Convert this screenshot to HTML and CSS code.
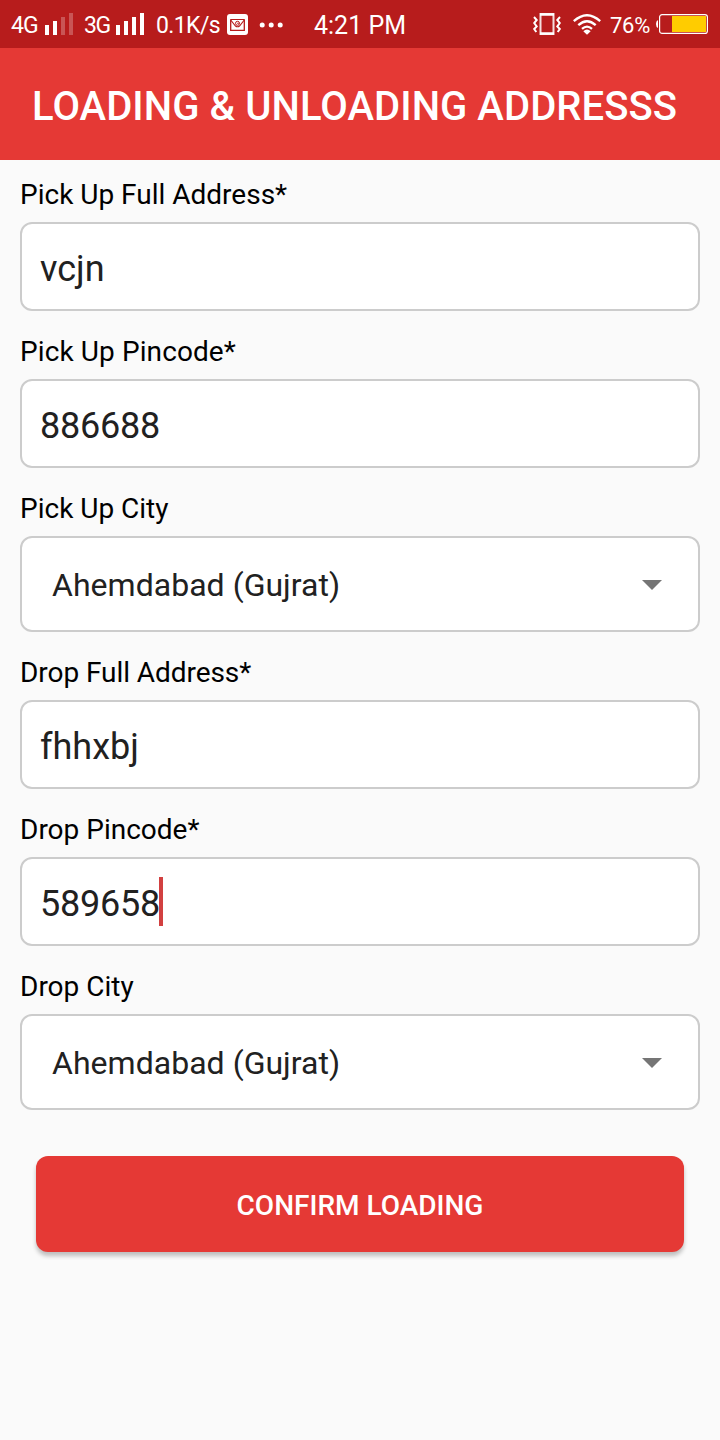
FILE: index.html
```html
<!DOCTYPE html>
<html lang="en">
<head>
<meta charset="utf-8">
<title>Loading &amp; Unloading Address</title>
<link rel="stylesheet" href="styles.css">
</head>
<body>
<div class="status">
  <span class="net net-4g">4G</span>
  <svg class="bars" width="30" height="22" viewBox="0 0 30 22" fill="#fff"><path d="M0 12h4v10H0zM8 8h4v14H8z"/><path opacity=".25" d="M16 4h4v18h-4zM24 0h4v22h-4z"/></svg>
  <span class="net net-3g">3G</span>
  <svg class="bars" width="30" height="22" viewBox="0 0 30 22" fill="#fff"><path d="M1 12h4v10H1zM9 8h4v14H9zM17 4h4v18h-4zM25 0h4v22h-4z"/></svg>
  <span class="speed">0.1K/s</span>
  <svg class="mail" width="21" height="21" viewBox="0 0 21 21"><rect width="21" height="21" rx="3" fill="#fff"/><g fill="none" stroke="#b71c1c"><path stroke-width="1.300" d="M3.700 6v10.300h13.600V6"/><path stroke-width="1.100" d="M3.200 5.500h14.600M3.700 6l4.800 6q2 1.600 4 0l4.800-6"/><circle cx="10.500" cy="9.300" r="2" stroke-width="1"/><path stroke-width=".8" d="M10 9.300h2.500"/></g></svg>
  <svg class="dots" width="26" height="6" viewBox="0 0 26 6" fill="#fff"><circle cx="3.200" cy="3" r="2.500"/><circle cx="12.200" cy="3" r="2.500"/><circle cx="21.200" cy="3" r="2.500"/></svg>
  <span class="clock">4:21 PM</span>
  <svg class="vibrate" width="28" height="22" viewBox="0 0 28 22" fill="none" stroke="#fff"><path stroke-width="2" d="M7.500 1h13v20h-13z" opacity=".85"/><path stroke-width="2.400" d="M7 1.500h14M7 20.500h14"/><path stroke-width="2" d="M1 4l2.700 3L1.200 10l2.500 3.500-2.500 2.500L3.300 19M27 4l-2.700 3 2.500 3-2.500 3.500 2.500 2.500-2.100 3"/></svg>
  <svg class="wifi" width="28" height="21" viewBox="0 0 28 21" fill="none" stroke="#fff" stroke-width="2.300"><path d="M.8 7.200Q14-4.800 27.200 7.200M5.300 11.200Q14 3.200 22.700 11.200M9 14.800Q14 10.400 19 14.800"/><path fill="#fff" stroke="none" d="M10.300 17.200Q14 14 17.700 17.200L14 20.800z"/></svg>
  <span class="percent">76%</span>
  <svg class="battery" width="52" height="20" viewBox="0 0 52 20"><path fill="#fff" d="M2 6v8Q0 13 0 10t2-4z"/><rect x="3.600" y=".6" width="47.800" height="18.800" rx="2.500" fill="none" stroke="#fff" stroke-width="1.200"/><path fill="#fc0" d="M16 2h34v16H16z"/></svg>
</div>
<header class="appbar"><h1 class="title">LOADING &amp; UNLOADING ADDRESSS</h1></header>
<main class="form">
  <section class="field">
    <div class="label">Pick Up Full Address*</div>
    <div class="input">vcjn</div>
  </section>
  <section class="field">
    <div class="label label-wide">Pick Up Pincode*</div>
    <div class="input digits">886688</div>
  </section>
  <section class="field">
    <div class="label">Pick Up City</div>
    <div class="select"><span>Ahemdabad (Gujrat)</span><svg width="20" height="10" viewBox="0 0 20 10"><path fill="#757575" d="M0 0h20L10 10z"/></svg></div>
  </section>
  <section class="field">
    <div class="label label-tight">Drop Full Address*</div>
    <div class="input">fhhxbj</div>
  </section>
  <section class="field">
    <div class="label">Drop Pincode*</div>
    <div class="input digits">589658<span class="caret"></span></div>
  </section>
  <section class="field">
    <div class="label">Drop City</div>
    <div class="select"><span>Ahemdabad (Gujrat)</span><svg width="20" height="10" viewBox="0 0 20 10"><path fill="#757575" d="M0 0h20L10 10z"/></svg></div>
  </section>
  <button class="confirm" type="button">CONFIRM LOADING</button>
</main>
</body>
</html>
```
FILE: styles.css
```css
* {
  box-sizing: border-box;
}
body {
  margin: 0;
  min-height: 1440px;
  background: #fafafa;
  color: #000;
  font-family: Roboto, sans-serif;
}
.status {
  display: flex;
  align-items: center;
  height: 48px;
  padding: 2px 12px 0 11px;
  background: #b71c1c;
  color: #fff;
  font-size: 24px;
  line-height: 28px;
  white-space: nowrap;
}
.status > * {
  flex: none;
}
.status > span {
  padding-top: 2px;
}
.net {
  font-size: 23px;
  letter-spacing: -1px;
}
.net-4g {
  width: 34px;
}
.net-3g {
  width: 31px;
  margin-left: 9px;
}
.net-3g {
  letter-spacing: -1.5px;
}
.bars {
  margin-top: -2px;
}
.speed {
  width: 71px;
  margin-left: 11px;
  font-size: 23px;
  letter-spacing: -0.6px;
}
.mail {
  margin-top: -1px;
}
.dots {
  margin: -1px 0 0 11px;
}
.clock {
  margin-left: 29px;
  font-size: 25px;
}
.vibrate {
  margin: -2px 12px 0 auto;
}
.wifi {
  margin-top: -2px;
}
.percent {
  width: 46px;
  margin-left: 9px;
  font-size: 22px;
  letter-spacing: -0.3px;
}
.battery {
  margin-top: -2px;
}
.appbar {
  display: flex;
  align-items: center;
  height: 112px;
  padding: 6px 32px 0;
  background: #e53935;
}
.title {
  margin: 0;
  color: #fff;
  font-size: 40px;
  font-weight: 500;
  line-height: 48px;
  letter-spacing: 0.06px;
  white-space: nowrap;
}
.form {
  display: flex;
  flex-direction: column;
  gap: 24px;
  padding: 18px 20px 0;
}
.label {
  height: 44px;
  font-size: 28px;
  line-height: 33px;
}
.label-wide {
  letter-spacing: 0.1px;
}
.label-tight {
  letter-spacing: -0.06px;
}
.input,
.select {
  display: flex;
  align-items: center;
  border: 2px solid #ccc;
  border-radius: 12px;
  background: #fff;
  color: #212121;
}
.input {
  height: 89px;
  padding: 4px 18px 0;
  font-size: 36px;
}
.digits {
  letter-spacing: -0.22px;
}
.select {
  justify-content: space-between;
  height: 96px;
  padding: 2px 36px 0 30px;
  font-size: 32px;
  letter-spacing: 0.03px;
}
.caret {
  width: 4px;
  height: 49px;
  margin: -4px 0 0 -1px;
  background: #d24040;
}
.confirm {
  height: 96px;
  margin: 22px 16px 0;
  padding: 3px 0 0;
  border: 0;
  border-radius: 12px;
  background: #e53935;
  box-shadow: 0 4px 4px rgba(0, 0, 0, 0.24);
  color: #fff;
  font-family: inherit;
  font-size: 28px;
  font-weight: 500;
}
```
